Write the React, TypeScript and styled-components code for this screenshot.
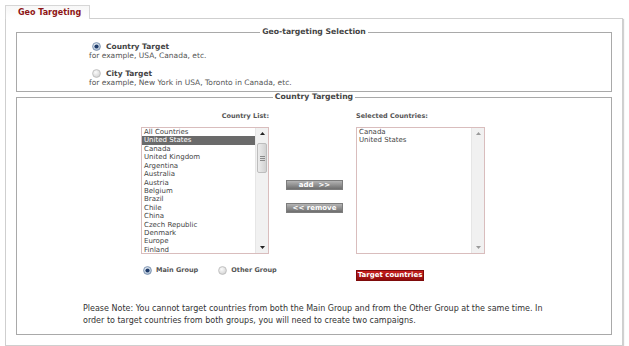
import styled, { createGlobalStyle } from "styled-components";

const GlobalStyle = createGlobalStyle`
  body {
    margin: 0;
    background: #fff;
    font-family: "DejaVu Sans", Verdana, sans-serif;
    color: #444;
  }
`;

const countries = [
  "All Countries",
  "United States",
  "Canada",
  "United Kingdom",
  "Argentina",
  "Australia",
  "Austria",
  "Belgium",
  "Brazil",
  "Chile",
  "China",
  "Czech Republic",
  "Denmark",
  "Europe",
  "Finland",
];

const selected = ["Canada", "United States"];

const Radio = ({ checked }: { checked?: boolean }) => (
  <RadioIcon width="9" height="9" viewBox="0 0 9 9">
    <defs>
      <radialGradient id={checked ? "rOn" : "rOff"} cx="0.4" cy="0.35" r="0.7">
        <stop offset="0" stopColor={checked ? "#f4f8fc" : "#fbfbfb"} />
        <stop offset="1" stopColor={checked ? "#a9bcd2" : "#d2d2d2"} />
      </radialGradient>
    </defs>
    <circle
      cx="4.5"
      cy="4.5"
      r="3.9"
      fill={`url(#${checked ? "rOn" : "rOff"})`}
      stroke={checked ? "#6f86a6" : "#b8b8b8"}
      strokeWidth="0.8"
    />
    {checked && <circle cx="4.5" cy="4.5" r="2.1" fill="#1d3b6a" />}
  </RadioIcon>
);

const Arrow = ({ down, light }: { down?: boolean; light?: boolean }) => (
  <svg width="5" height="3" viewBox="0 0 5 3">
    <path
      d={down ? "M0 0 L5 0 L2.5 3 Z" : "M0 3 L5 3 L2.5 0 Z"}
      fill={light ? "#9a9a9a" : "#222"}
    />
  </svg>
);

const ListBox = ({
  items,
  active,
  thumb,
}: {
  items: string[];
  active?: string;
  thumb?: boolean;
}) => (
  <Box>
    <Items>
      {items.map((c) => (
        <Item key={c} $active={c === active}>
          {c}
        </Item>
      ))}
    </Items>
    <ScrollBar>
      <ScrollBtn>
        <Arrow light={!thumb} />
      </ScrollBtn>
      <Track>
        {thumb && (
          <Thumb>
            <Grip />
            <Grip />
            <Grip />
          </Thumb>
        )}
      </Track>
      <ScrollBtn>
        <Arrow down light={!thumb} />
      </ScrollBtn>
    </ScrollBar>
  </Box>
);

export default function App() {
  return (
    <Page>
      <GlobalStyle />
      <Tab>Geo Targeting</Tab>
      <Panel>
        <Fieldset>
          <Legend>Geo-targeting Selection</Legend>
          <Options>
            <Option>
              <OptionLabel>
                <Radio checked />
                Country Target
              </OptionLabel>
              <Hint>for example, USA, Canada, etc.</Hint>
            </Option>
            <Option>
              <OptionLabel>
                <Radio />
                City Target
              </OptionLabel>
              <Hint>for example, New York in USA, Toronto in Canada, etc.</Hint>
            </Option>
          </Options>
        </Fieldset>

        <Fieldset $second>
          <Legend>Country Targeting</Legend>
          <Columns>
            <Column>
              <ColLabel $right>Country List:</ColLabel>
              <ListBox items={countries} active="United States" thumb />
              <Groups>
                <GroupLabel>
                  <Radio checked />
                  Main Group
                </GroupLabel>
                <GroupLabel>
                  <Radio />
                  Other Group
                </GroupLabel>
              </Groups>
            </Column>
            <Middle>
              <GrayButton>add &nbsp;&gt;&gt;</GrayButton>
              <GrayButton>&lt;&lt; remove</GrayButton>
            </Middle>
            <Column $right>
              <ColLabel>Selected Countries:</ColLabel>
              <ListBox items={selected} />
              <RedButton>Target countries</RedButton>
            </Column>
          </Columns>
          <Note>
            Please Note: You cannot target countries from both the Main Group and
            from the Other Group at the same time. In order to target countries
            from both groups, you will need to create two campaigns.
          </Note>
        </Fieldset>
      </Panel>
    </Page>
  );
}

const Page = styled.div`
  width: 629px;
  box-sizing: border-box;
  padding: 5px 6px 0 5px;
`;

const Tab = styled.div`
  position: relative;
  z-index: 1;
  width: 85px;
  height: 14px;
  box-sizing: border-box;
  margin-bottom: -1px;
  padding-left: 12px;
  border: 1px solid #d6d6d6;
  border-bottom: none;
  background: linear-gradient(to bottom, #f7f7f7, #fff);
  color: #8e1515;
  font-size: 8px;
  font-weight: bold;
  line-height: 13px;
`;

const Panel = styled.div`
  border: 1px solid #cfcfcf;
  box-shadow: 1px 1px 1px rgba(0, 0, 0, 0.18);
  padding: 8px 10px 10px 10px;
`;

const Fieldset = styled.fieldset<{ $second?: boolean }>`
  margin: 0;
  border: 1px solid #a9a9a9;
  padding: ${(p) => (p.$second ? "9px 0 8px 0" : "4px 0 4px 0")};
  min-width: 0;
`;

const Legend = styled.legend`
  margin-left: auto;
  margin-right: auto;
  padding: 0 2px;
  font-size: 7.7px;
  font-weight: bold;
  line-height: 10px;
  color: #444;
`;

const Options = styled.div`
  display: flex;
  flex-direction: column;
  gap: 8px;
  padding-left: 72px;
`;

const Option = styled.div`
  display: flex;
  flex-direction: column;
`;

const OptionLabel = styled.div`
  display: flex;
  align-items: center;
  gap: 5px;
  padding-left: 3px;
  height: 10px;
  font-size: 7.5px;
  font-weight: bold;
  color: #444;
`;

const Hint = styled.div`
  font-size: 7.5px;
  line-height: 9px;
  color: #555;
`;

const RadioIcon = styled.svg`
  flex: none;
  display: block;
`;

const Columns = styled.div`
  display: flex;
  align-items: flex-start;
  padding-left: 124px;
`;

const Column = styled.div<{ $right?: boolean }>`
  display: flex;
  flex-direction: column;
  width: ${(p) => (p.$right ? "129px" : "128px")};
`;

const ColLabel = styled.div<{ $right?: boolean }>`
  height: 10px;
  line-height: 10px;
  margin-bottom: 6px;
  font-size: 6.5px;
  font-weight: bold;
  color: #555;
  text-align: ${(p) => (p.$right ? "right" : "left")};
`;

const Box = styled.div`
  display: flex;
  height: 127px;
  box-sizing: border-box;
  border: 1px solid #d9bdbd;
  background: #fff;
  overflow: hidden;
`;

const Items = styled.div`
  flex: 1;
  overflow: hidden;
`;

const Item = styled.div<{ $active?: boolean }>`
  height: 8.43px;
  line-height: 8.43px;
  padding-left: 2px;
  font-size: 7px;
  white-space: nowrap;
  color: ${(p) => (p.$active ? "#fff" : "#444")};
  background: ${(p) => (p.$active ? "#6a6a6a" : "transparent")};
`;

const ScrollBar = styled.div`
  width: 12px;
  flex: none;
  display: flex;
  flex-direction: column;
  background: #f1f1f1;
  border-left: 1px solid #e6e6e6;
`;

const ScrollBtn = styled.div`
  height: 11px;
  display: flex;
  align-items: center;
  justify-content: center;
`;

const Track = styled.div`
  flex: 1;
`;

const Thumb = styled.div`
  margin: 4px 1px 0 1px;
  height: 30px;
  box-sizing: border-box;
  border: 1px solid #bdbdbd;
  border-radius: 2px;
  background: linear-gradient(to right, #ececec, #d2d2d2);
  display: flex;
  flex-direction: column;
  align-items: center;
  justify-content: center;
  gap: 1px;
`;

const Grip = styled.div`
  width: 5px;
  height: 1px;
  background: #8a8a8a;
`;

const Groups = styled.div`
  display: flex;
  align-items: center;
  gap: 20px;
  margin-top: 11px;
  padding-left: 2px;
  white-space: nowrap;
`;

const GroupLabel = styled.div`
  flex: none;
  display: flex;
  align-items: center;
  gap: 4px;
  height: 10px;
  font-size: 6.5px;
  font-weight: bold;
  color: #555;
`;

const Middle = styled.div`
  width: 57px;
  margin: 69px 13px 0 17px;
  display: flex;
  flex-direction: column;
  gap: 13px;
`;

const GrayButton = styled.div`
  height: 10px;
  box-sizing: border-box;
  border: 1px solid #7d7d7d;
  background: linear-gradient(to bottom, #b4b4b4, #6e6e6e);
  color: #fff;
  font-size: 7px;
  font-weight: bold;
  line-height: 8px;
  text-align: center;
`;

const RedButton = styled.div`
  margin-top: 16px;
  width: 68px;
  height: 11px;
  box-sizing: border-box;
  border: 1px solid #7e0b0b;
  background: linear-gradient(to bottom, #c8201f, #900b0b);
  color: #fff;
  font-size: 7px;
  font-weight: bold;
  line-height: 9px;
  text-align: center;
`;

const Note = styled.p`
  margin: 22px 0 0 66px;
  width: 472px;
  font-size: 8px;
  line-height: 11.5px;
  color: #333;
`;
